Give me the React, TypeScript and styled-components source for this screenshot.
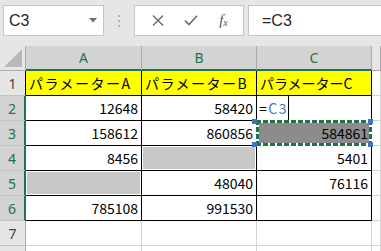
import React, { ReactElement } from "react";
import styled, { createGlobalStyle } from "styled-components";

const GREEN = "#217346";

type Fill = "yellow" | "light" | "dark";
type CellSpec = { text?: string; fill?: Fill; editing?: boolean; copied?: boolean; tight?: boolean };

const columns = ["A", "B", "C"];

const table: CellSpec[][] = [
    [
        { text: "パラメーターA", fill: "yellow" },
        { text: "パラメーターB", fill: "yellow" },
        { text: "パラメーターC", fill: "yellow", tight: true },
    ],
    [{ text: "12648" }, { text: "58420" }, { editing: true }],
    [{ text: "158612" }, { text: "860856" }, { text: "584861", fill: "dark", copied: true }],
    [{ text: "8456" }, { fill: "light" }, { text: "5401" }],
    [{ fill: "light" }, { text: "48040" }, { text: "76116" }],
    [{ text: "785108" }, { text: "991530" }, {}],
];

// row 8 is only a sliver at the bottom edge, its number is not visible
const ROW_COUNT = 8;
const LABELLED_ROWS = 7;

export default function App(): ReactElement {
    const rows = [];

    for (let r = 1; r <= ROW_COUNT; r++) {
        const data = table[r - 1];
        const selected = r >= 2 && r <= 6;

        rows.push(
            <RowHeader key={`h${r}`} $selected={selected} $edge={r === 1}>
                {r <= LABELLED_ROWS ? r : ""}
            </RowHeader>
        );

        columns.forEach((col, i) => {
            const spec: CellSpec = data ? data[i] : {};
            const numeric = !!spec.text && /^\d+$/.test(spec.text);

            rows.push(
                <Cell
                    key={`${col}${r}`}
                    $table={!!data}
                    $fill={spec.fill}
                    $right={numeric}
                    $tight={!!spec.tight}
                >
                    {spec.editing && (
                        <EditBox>
                            =<RefText>C3</RefText>
                        </EditBox>
                    )}
                    {!spec.editing && spec.text}
                    {spec.copied && (
                        <>
                            <Marquee />
                            <Handle $x="left" $y="top" />
                            <Handle $x="right" $y="top" />
                            <Handle $x="left" $y="bottom" />
                            <Handle $x="right" $y="bottom" />
                        </>
                    )}
                </Cell>
            );
        });

        rows.push(<Cell key={`D${r}`} $table={false} $right={false} $tight={false} />);
    }

    return (
        <Window>
            <GlobalStyle />
            <FormulaBar>
                <NameBox>
                    C3
                    <svg width="8" height="5" viewBox="0 0 8 5">
                        <polygon points="0,0 8,0 4,4.5" fill="#6f6f6f" />
                    </svg>
                </NameBox>
                <Splitter>
                    <Dot />
                    <Dot />
                    <Dot />
                </Splitter>
                <ButtonGroup>
                    <BarButton>
                        <svg width="12" height="11" viewBox="0 0 12 11">
                            <path d="M1 0.5 L11 10.5 M11 0.5 L1 10.5" stroke="#6b6b6b" strokeWidth="1.4" />
                        </svg>
                    </BarButton>
                    <BarButton>
                        <svg width="14" height="11" viewBox="0 0 14 11">
                            <path d="M1 5.5 L5 9.5 L13 0.8" stroke="#6b6b6b" strokeWidth="1.6" fill="none" />
                        </svg>
                    </BarButton>
                    <BarButton>
                        <Fx>
                            f<sub>x</sub>
                        </Fx>
                    </BarButton>
                </ButtonGroup>
                <FormulaInput>=C3</FormulaInput>
            </FormulaBar>

            <Sheet>
                <Corner>
                    <svg width="18" height="18" viewBox="0 0 18 18">
                        <polygon points="18,0 18,18 0,18" fill="#b9b9b9" />
                    </svg>
                </Corner>
                {columns.map((col) => (
                    <ColHeader key={col} $selected>
                        {col}
                    </ColHeader>
                ))}
                <ColHeader $selected={false} />
                {rows}
            </Sheet>
        </Window>
    );
}

const GlobalStyle = createGlobalStyle`
    html, body {
        margin: 0;
        padding: 0;
        background: #e6e6e6;
    }
`;

const Window = styled.div`
    width: 381px;
    height: 251px;
    overflow: hidden;
    background: #e6e6e6;
    font-family: "Noto Sans CJK JP", "Noto Sans", sans-serif;
`;

const FormulaBar = styled.div`
    height: 46px;
    box-sizing: border-box;
    padding: 5px 0 0 3px;
    display: flex;
    align-items: flex-start;
`;

const NameBox = styled.div`
    width: 101px;
    height: 31px;
    box-sizing: border-box;
    border: 1px solid #c6c6c6;
    background: #fff;
    display: flex;
    align-items: center;
    justify-content: space-between;
    padding: 0 6px 0 5px;
    font-family: "Liberation Sans", sans-serif;
    font-size: 16px;
    color: #262626;
`;

const Splitter = styled.div`
    width: 30px;
    height: 31px;
    display: flex;
    flex-direction: column;
    align-items: center;
    justify-content: center;
    gap: 3px;
`;

const Dot = styled.span`
    width: 2px;
    height: 2px;
    background: #b3b3b3;
`;

const ButtonGroup = styled.div`
    width: 110px;
    height: 31px;
    box-sizing: border-box;
    border: 1px solid #c6c6c6;
    background: #fff;
    display: flex;
    align-items: center;
    padding-left: 6px;
`;

const BarButton = styled.div`
    width: 33px;
    height: 100%;
    display: flex;
    align-items: center;
    justify-content: center;
`;

const Fx = styled.span`
    font-family: "Liberation Serif", serif;
    font-style: italic;
    font-size: 15px;
    color: #555;

    sub {
        font-size: 10px;
        vertical-align: -1px;
    }
`;

const FormulaInput = styled.div`
    flex: 1;
    height: 31px;
    margin-left: 4px;
    margin-right: -2px;
    box-sizing: border-box;
    border: 1px solid #c6c6c6;
    background: #fff;
    display: flex;
    align-items: center;
    padding-left: 13px;
    font-family: "Liberation Sans", sans-serif;
    font-size: 16px;
    color: #262626;
`;

const Sheet = styled.div`
    display: grid;
    grid-template-columns: 26px 116px 115px 115px 1fr;
    grid-auto-rows: 25px;
    background: #fff;
    font-size: 14px;
`;

const Corner = styled.div`
    box-sizing: border-box;
    background: #e6e6e6;
    border-right: 1px solid #ababab;
    border-bottom: 1px solid #ababab;
    display: flex;
    align-items: flex-end;
    justify-content: flex-end;
    padding: 0 3px 3px 0;
`;

const ColHeader = styled.div<{ $selected: boolean }>`
    box-sizing: border-box;
    background: ${(p) => (p.$selected ? "#d3d3d3" : "#e6e6e6")};
    color: ${(p) => (p.$selected ? GREEN : "#444")};
    border-right: 1px solid #ababab;
    border-bottom: ${(p) => (p.$selected ? `2px solid ${GREEN}` : "1px solid #ababab")};
    display: flex;
    align-items: center;
    justify-content: center;
    font-family: "Noto Sans", sans-serif;
`;

const RowHeader = styled.div<{ $selected: boolean; $edge: boolean }>`
    box-sizing: border-box;
    background: ${(p) => (p.$selected ? "#d3d3d3" : "#e6e6e6")};
    color: ${(p) => (p.$selected ? GREEN : "#444")};
    border-right: ${(p) => (p.$selected ? `2px solid ${GREEN}` : p.$edge ? "1px solid #000" : "1px solid #ababab")};
    border-bottom: 1px solid #c3c3c3;
    display: flex;
    align-items: center;
    justify-content: center;
    font-family: "Noto Sans", sans-serif;
`;

const fills: Record<Fill, string> = {
    yellow: "#ffff00",
    light: "#c8c8c8",
    dark: "#8c8c8e",
};

const Cell = styled.div<{ $table: boolean; $fill?: Fill; $right: boolean; $tight: boolean }>`
    position: relative;
    box-sizing: border-box;
    border-right: 1px solid ${(p) => (p.$table ? "#000" : "#d4d4d4")};
    border-bottom: 1px solid ${(p) => (p.$table ? "#000" : "#d4d4d4")};
    background: ${(p) => (p.$fill ? fills[p.$fill] : "#fff")};
    box-shadow: ${(p) => (p.$fill === "light" ? "inset 0 0 0 1px #fff" : "none")};
    display: flex;
    align-items: center;
    justify-content: ${(p) => (p.$right ? "flex-end" : "flex-start")};
    padding: 0 3px;
    color: #000;
    letter-spacing: ${(p) => (p.$fill === "yellow" && !p.$tight ? "1.5px" : "0")};
    white-space: nowrap;
    overflow: visible;
`;

const EditBox = styled.span`
    align-self: stretch;
    display: flex;
    align-items: center;
    margin-left: -2px;
    padding: 0 0 0 1px;
    letter-spacing: 1.5px;
    border-right: 1px solid #000;
`;

const RefText = styled.span`
    color: #4472c4;
`;

const dashH = `repeating-linear-gradient(90deg, ${GREEN} 0 5px, #fff 5px 7px)`;
const dashV = `repeating-linear-gradient(180deg, ${GREEN} 0 5px, #fff 5px 7px)`;

const Marquee = styled.div`
    position: absolute;
    inset: -1px;
    background:
        ${dashH} left top / 100% 3px no-repeat,
        ${dashH} left bottom / 100% 3px no-repeat,
        ${dashV} left top / 3px 100% no-repeat,
        ${dashV} right top / 3px 100% no-repeat;
`;

const Handle = styled.span<{ $x: "left" | "right"; $y: "top" | "bottom" }>`
    position: absolute;
    width: 5px;
    height: 5px;
    background: #3f73c4;
    ${(p) => (p.$x === "left" ? "left: -5px;" : "right: -2px;")}
    ${(p) => (p.$y === "top" ? "top: -2px;" : "bottom: -2px;")}
    z-index: 2;
`;
